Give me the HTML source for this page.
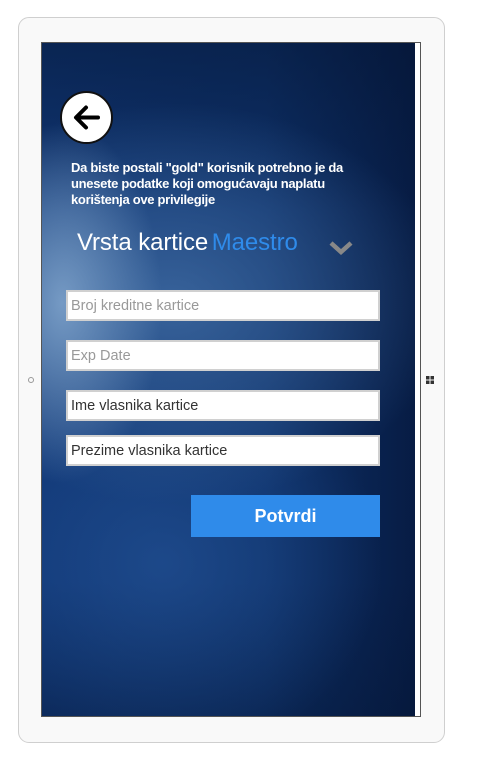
<!DOCTYPE html>
<html><head><meta charset="utf-8"><style>
*{margin:0;padding:0;box-sizing:border-box}
body{width:483px;height:758px;background:#fff;position:relative;font-family:"Liberation Sans",Arial,sans-serif;overflow:hidden}
.frame{position:absolute;left:18px;top:17px;width:427px;height:726px;background:#f9f9f9;border:1px solid #cfcfcf;border-radius:11px}
.screen{position:absolute;left:41px;top:42px;width:380px;height:675px;border:1px solid #555;background:#fff}
.bg{position:absolute;left:0;top:0;width:373px;height:673px;
background:
radial-gradient(ellipse 100px 180px at 20px 260px,rgba(150,185,220,.7),rgba(150,185,220,0)),
radial-gradient(ellipse 280px 200px at 130px 260px,rgba(70,115,170,.75),rgba(70,115,170,0)),
radial-gradient(ellipse 220px 200px at 120px 520px,rgba(40,90,160,.55),rgba(40,90,160,0)),
linear-gradient(180deg,rgba(4,20,50,.5) 0%,rgba(4,20,50,0) 25%,rgba(4,20,50,0) 80%,rgba(4,20,50,.4) 100%),
linear-gradient(90deg,#103674 0%,#0e3169 60%,#071c44 100%);}
.back{position:absolute;left:60px;top:91px;width:53px;height:53px;border-radius:50%;background:#fff;border:2px solid #111}
.txt{position:absolute;left:71px;top:160px;color:#fff;font-size:13px;line-height:16px;width:305px;font-weight:bold;letter-spacing:-.3px}
.title{position:absolute;left:77px;top:229px;font-size:24px;color:#fff;letter-spacing:-.1px;white-space:nowrap;font-weight:500}
.title span{color:#2f8bea;margin-left:-3px}
.chev{position:absolute;left:328px;top:240px}
.in{position:absolute;left:66px;width:314px;height:31px;background:#fff;border:2px solid #d0d0d0;font-size:14.5px;padding:6px 3px;color:#333}
.ph{color:#999}
.btn{position:absolute;left:191px;top:495px;width:189px;height:42px;background:#2f8bea;color:#fff;font-size:18px;font-weight:bold;text-align:center;line-height:42px}
.dot{position:absolute;left:28px;top:377px;width:6px;height:6px;border-radius:50%;border:1px solid #999}
</style></head><body>
<div class="frame"></div>
<div class="dot"></div>
<svg style="position:absolute;left:426px;top:376px" width="8" height="8"><rect x="0" y="0" width="3.5" height="3.5" fill="#333"/><rect x="4.5" y="0" width="3.5" height="3.5" fill="#333"/><rect x="0" y="4.5" width="3.5" height="3.5" fill="#333"/><rect x="4.5" y="4.5" width="3.5" height="3.5" fill="#333"/></svg>
<div class="screen"><div class="bg"></div></div>
<div class="back"><svg width="49" height="49" viewBox="0 0 49 49"><path d="M36 24.5H15M24 14.5L14 24.5L24 34.5" stroke="#000" stroke-width="4" fill="none" stroke-linecap="round" stroke-linejoin="round"/></svg></div>
<div class="txt">Da biste postali "gold" korisnik potrebno je da unesete podatke koji omogućavaju naplatu korištenja ove privilegije</div>
<div class="title">Vrsta kartice <span>Maestro</span></div>
<svg class="chev" width="26" height="16"><path d="M3 3L13 12L23 3" stroke="#888" stroke-width="4.5" fill="none"/></svg>
<div class="in ph" style="top:290px">Broj kreditne kartice</div>
<div class="in ph" style="top:340px">Exp Date</div>
<div class="in" style="top:390px">Ime vlasnika kartice</div>
<div class="in" style="top:435px">Prezime vlasnika kartice</div>
<div class="btn">Potvrdi</div>
</body></html>
